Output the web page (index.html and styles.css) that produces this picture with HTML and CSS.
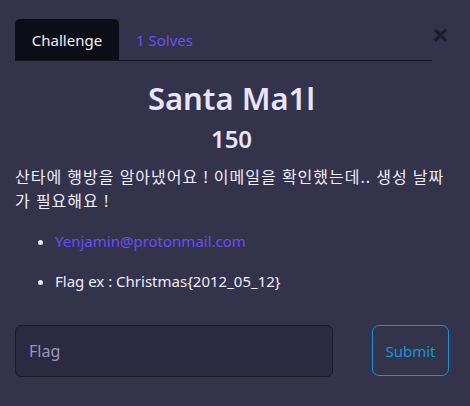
FILE: index.html
```html
<!DOCTYPE html>
<html>
<head>
<meta charset="utf-8">
<link rel="stylesheet" href="styles.css">
</head>
<body>
<div class="modal">
  <div class="header">
    <ul class="tabs">
      <li class="tab active">Challenge</li>
      <li class="tab">1 Solves</li>
    </ul>
    <button class="close">&times;</button>
  </div>
  <div class="body">
    <h2 class="title">Santa Ma1l</h2>
    <h3 class="value">150</h3>
    <p class="desc">산타에 행방을 알아냈어요 ! 이메일을 확인했는데.. 생성 날짜가 필요해요 !</p>
    <ul class="items">
      <li><a href="#">Yenjamin@protonmail.com</a></li>
      <li>Flag ex : Christmas{2012_05_12}</li>
    </ul>
    <div class="submit-row">
      <input class="flag" type="text" placeholder="Flag">
      <button class="submit">Submit</button>
    </div>
  </div>
</div>
</body>
</html>
```
FILE: styles.css
```css
html, body {
  margin: 0;
  padding: 0;
  background: #33334b;
  width: 470px;
  height: 406px;
  overflow: hidden;
}
body {
  font-family: "Noto Sans", "Noto Sans CJK KR", sans-serif;
  color: #f0ecff;
}
.modal {
  padding: 19px 22px 0 15px;
}
.header {
  display: flex;
  align-items: flex-start;
  justify-content: space-between;
}
.tabs {
  list-style: none;
  margin: 0;
  padding: 0;
  display: flex;
  width: 417px;
  border-bottom: 1px solid #16161f;
}
.tab {
  height: 41px;
  box-sizing: border-box;
  padding: 0 17px;
  display: flex;
  align-items: center;
  font-size: 15px;
  color: #6a4ff0;
}
.tab.active {
  background: #0e0e18;
  color: #f3f0ff;
  border-radius: 5px 5px 0 0;
  padding: 0 16px;
  width: 104px;
  justify-content: center;
}
.close {
  background: none;
  border: none;
  padding: 0;
  margin-top: 4px;
  font-size: 26px;
  line-height: 24px;
  font-weight: bold;
  color: #1b1b2b;
  font-family: "Liberation Sans", sans-serif;
}
.body {
  width: 433px;
}
.title {
  margin: 17px 0 0;
  text-align: center;
  font-size: 31px;
  font-weight: 600;
  line-height: 40px;
  color: #e9e4ff;
}
.value {
  margin: 5px 0 0;
  text-align: center;
  font-size: 24px;
  font-weight: 600;
  line-height: 32px;
  color: #e9e4ff;
}
.desc {
  margin: 10px 0 0;
  font-size: 16px;
  line-height: 24px;
  letter-spacing: 1px;
}
.items {
  margin: 16px 0 0;
  padding-left: 40px;
  font-size: 15px;
  line-height: 24px;
}
.items li {
  margin-bottom: 16px;
}
.items li::marker {
  color: #e9e4ff;
}
.items a {
  color: #6a4ff0;
  text-decoration: none;
}
.submit-row {
  display: flex;
  justify-content: space-between;
  margin-top: 32px;
}
.flag {
  width: 318px;
  height: 52px;
  box-sizing: border-box;
  background: #2a2a40;
  border: 1px solid #1a1a28;
  border-radius: 6px;
  padding: 0 13px;
  font-family: inherit;
  font-size: 16px;
  color: #f0ecff;
  outline: none;
}
.flag::placeholder {
  color: #9d93c2;
}
.submit {
  width: 77px;
  height: 51px;
  margin-right: -1px;
  background: transparent;
  border: 1px solid #1596d6;
  border-radius: 7px;
  color: #1596d6;
  font-family: inherit;
  font-size: 15px;
  padding: 0;
}
```
